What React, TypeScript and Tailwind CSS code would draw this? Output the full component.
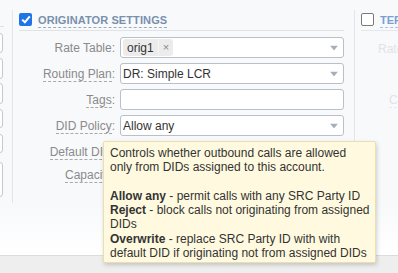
import React from 'react';

const font = { fontFamily: '"Liberation Sans", Arial, sans-serif' };

const Arrow = () => (
  <svg width="8" height="5" viewBox="0 0 8 5" className="absolute right-[5px] top-1/2 -translate-y-1/2">
    <path d="M0 0 H8 L4 5 Z" fill="#a6aeb9" />
  </svg>
);

const Label = ({ text, dashed = true }: { text: string; dashed?: boolean }) => (
  <div className="w-[96px] shrink-0 text-right text-[12px] leading-[14px] text-[#8a8a8a] whitespace-nowrap">
    <span className={dashed ? 'border-b border-dashed border-[#a9a9a9]' : ''}>{text}</span>:
  </div>
);

const Field = ({ children, arrow = false }: { children?: React.ReactNode; arrow?: boolean }) => (
  <div className="relative flex h-[21px] w-[224px] items-center rounded-[3px] border border-[#b9c0ca] bg-white pl-[2px] text-[12px] text-[#333]">
    {children}
    {arrow && <Arrow />}
  </div>
);

const Row = ({ label, dashed, children, arrow }: { label: string; dashed?: boolean; children?: React.ReactNode; arrow?: boolean }) => (
  <div className="flex items-center gap-[5px]">
    <Label text={label} dashed={dashed} />
    <Field arrow={arrow}>{children}</Field>
  </div>
);

const Check = ({ on }: { on: boolean }) =>
  on ? (
    <div className="flex h-[13px] w-[13px] items-center justify-center rounded-[2px] bg-[#1f74e6]">
      <svg width="10" height="9" viewBox="0 0 10 9">
        <path d="M1.2 4.6 L3.9 7.2 L8.8 1.4" fill="none" stroke="white" strokeWidth="2" />
      </svg>
    </div>
  ) : (
    <div className="h-[13px] w-[13px] rounded-[2px] border border-[#7a7a7a] bg-white" />
  );

export default function App() {
  return (
    <div className="relative flex h-[273px] w-[398px] flex-col overflow-hidden bg-[#f8f9fb]" style={font}>
      <div className="flex h-[205px] shrink-0 pt-[10px]">
        {/* clipped column on the left */}
        <div className="relative h-[193px] w-[13px] shrink-0 border-r border-[#e2e5ea]">
          <div className="absolute left-0 top-[16px] h-px w-[4px] bg-[#dde1e6]" />
          <div className="absolute left-[-10px] top-[23px] h-[20px] w-[13px] rounded-[3px] border border-[#c3c9d1] bg-white" />
          <div className="absolute left-[-10px] top-[48px] h-[21px] w-[13px] rounded-[3px] border border-[#c3c9d1] bg-white" />
          <div className="absolute left-[-10px] top-[73px] h-[21px] w-[13px] rounded-[3px] border border-[#c3c9d1] bg-white" />
          <div className="absolute left-[-10px] top-[99px] h-[19px] w-[13px] rounded-[3px] border border-[#c3c9d1] bg-white" />
          <div className="absolute left-[-10px] top-[124px] h-[19px] w-[13px] rounded-[3px] border border-[#c3c9d1] bg-white" />
          <div className="absolute left-[-10px] top-[152px] h-[35px] w-[13px] rounded-[3px] border border-[#c3c9d1] bg-white" />
        </div>

        {/* originator settings */}
        <div className="w-[341px] shrink-0 pl-[6px] pr-[10px]">
          <div className="flex h-[21px] items-start gap-[6px] border-b border-[#dfe3e8] pt-[3px]">
            <Check on />
            <span className="border-b border-dashed border-[#9aabc0] text-[11px] font-bold leading-[14px] tracking-[0.1px] text-[#7890ae]">
              ORIGINATOR SETTINGS
            </span>
          </div>
          <div className="mt-[6px] flex flex-col gap-[5px]">
            <Row label="Rate Table" dashed={false} arrow>
              <div className="flex h-[17px] items-center rounded-[3px] bg-[#ececec]">
                <span className="px-[4px] text-[12px] text-[#333]">orig1</span>
                <span className="flex h-full items-center border-l border-[#f6f6f6] px-[4px] text-[11px] text-[#888]">×</span>
              </div>
            </Row>
            <Row label="Routing Plan" arrow>
              DR: Simple LCR
            </Row>
            <Row label="Tags" />
            <Row label="DID Policy" arrow>
              Allow any
            </Row>
            <Row label="Default DID" arrow />
            <div className="-mt-[3px]">
              <Row label="Capacity" />
            </div>
          </div>
        </div>

        {/* terminator settings, disabled */}
        <div className="h-[193px] flex-1 border-l border-[#e2e5ea] pl-[6px]">
          <div className="flex h-[21px] items-start gap-[6px] border-b border-[#e4e7eb] pt-[3px]">
            <Check on={false} />
            <span className="whitespace-nowrap border-b border-dashed border-[#a9c0de] text-[11px] font-bold leading-[14px] text-[#79a0d4]">
              TERMINATOR SETTINGS
            </span>
          </div>
          <div className="mt-[11px] whitespace-nowrap pl-[17px] text-[12px] leading-[14px] text-[#e1e3e7]">Rate Table:</div>
          <div className="mt-[37px] whitespace-nowrap pl-[28px] text-[12px] leading-[14px] text-[#e1e3e7]">
            <span className="border-b border-dashed border-[#e6e8ec]">Capacity</span>
          </div>
        </div>
      </div>
      <div className="h-[50px] shrink-0 bg-gradient-to-b from-[#f8f9fb] to-white" />
      <div className="flex-1 border-t border-[#dcdcdc] bg-[#eeeeee]" />

      {/* tooltip */}
      <div className="absolute left-[103px] top-[141px] h-[122px] w-[273px] rounded-[2px] border border-[#eadfae] bg-[#fffadf] px-[6px] pt-[4px] text-[12px] leading-[14.3px] text-[#333] shadow-[1px_2px_4px_rgba(0,0,0,0.18)] whitespace-nowrap">
        Controls whether outbound calls are allowed
        <br />
        only from DIDs assigned to this account.
        <br />
        <br />
        <b>Allow any</b> - permit calls with any SRC Party ID
        <br />
        <b>Reject</b> - block calls not originating from assigned
        <br />
        DIDs
        <br />
        <b>Overwrite</b> - replace SRC Party ID with with
        <br />
        default DID if originating not from assigned DIDs
      </div>
    </div>
  );
}
